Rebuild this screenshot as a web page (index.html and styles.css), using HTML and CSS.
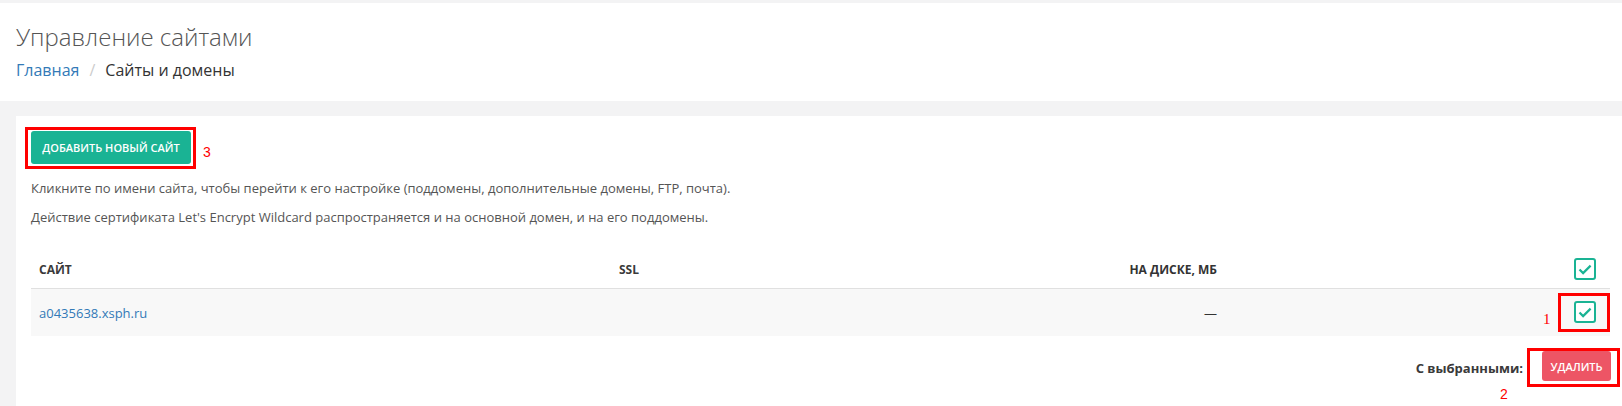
FILE: index.html
```html
<!DOCTYPE html>
<html lang="ru">
<head>
<meta charset="utf-8">
<title>Управление сайтами</title>
<link rel="stylesheet" href="styles.css">
</head>
<body>
<div class="topline"></div>
<header class="page-heading">
  <h2 class="page-title">Управление сайтами</h2>
  <ol class="breadcrumb">
    <li><a href="#">Главная</a></li>
    <li class="sep">/</li>
    <li class="active">Сайты и домены</li>
  </ol>
</header>
<main class="wrapper">
  <section class="card">
    <div class="add-row">
      <span class="mark mark-add"><button class="btn btn-primary">ДОБАВИТЬ НОВЫЙ САЙТ</button></span>
      <span class="note note-3">3</span>
    </div>
    <p class="text">Кликните по имени сайта, чтобы перейти к его настройке (поддомены, дополнительные домены, FTP, почта).</p>
    <p class="text">Действие сертификата Let's Encrypt Wildcard распространяется и на основной домен, и на его поддомены.</p>
    <table class="sites">
      <thead>
        <tr>
          <th class="c-site">САЙТ</th>
          <th class="c-ssl">SSL</th>
          <th class="c-disk">НА ДИСКЕ, МБ</th>
          <th class="c-check"><span class="cb cb-head"><svg viewBox="0 0 22 22" width="22" height="22"><path d="M5.5 11.5l3.6 3.6L16.6 7.6" fill="none" stroke="#1ab394" stroke-width="2.2"/></svg></span></th>
        </tr>
      </thead>
      <tbody>
        <tr>
          <td class="c-site"><a href="#">a0435638.xsph.ru</a></td>
          <td class="c-ssl"></td>
          <td class="c-disk">—</td>
          <td class="c-check"><span class="mark mark-row"><span class="note note-1">1</span><span class="cb"><svg viewBox="0 0 22 22" width="22" height="22"><path d="M5.5 11.5l3.6 3.6L16.6 7.6" fill="none" stroke="#1ab394" stroke-width="2.2"/></svg></span></span></td>
        </tr>
      </tbody>
    </table>
    <div class="bulk">
      <span class="bulk-label">С выбранными:</span>
      <span class="mark mark-del"><button class="btn btn-danger">УДАЛИТЬ</button><span class="note note-2">2</span></span>
    </div>
  </section>
</main>
</body>
</html>
```
FILE: styles.css
```css
html, body {
  margin: 0;
  padding: 0;
}
body {
  background: #f3f3f4;
  font-family: "Open Sans", "Noto Sans", sans-serif;
  font-size: 13px;
  color: #555;
  overflow: hidden;
  width: 1622px;
  height: 406px;
}
.topline {
  height: 3px;
}
.page-heading {
  background: #fff;
  height: 98px;
  box-sizing: border-box;
  padding: 18px 16px 0;
}
.page-title {
  margin: 0;
  font-size: 24px;
  font-weight: 300;
  line-height: 32px;
  color: #555;
}
.breadcrumb {
  list-style: none;
  margin: 6px 0 0;
  padding: 0;
  display: flex;
  font-size: 16px;
  line-height: 22px;
}
.breadcrumb a {
  color: #337ab7;
  text-decoration: none;
}
.breadcrumb .sep {
  color: #ccc;
  padding: 0 10px;
}
.breadcrumb .active {
  color: #333;
}
.wrapper {
  padding: 15px 0 0 16px;
}
.card {
  background: #fff;
  width: 1609px;
  box-sizing: border-box;
  padding: 11px 15px 20px;
  height: 300px;
}
.add-row {
  display: flex;
  align-items: center;
}
.mark {
  position: relative;
  border: 3px solid #f00;
  box-sizing: border-box;
}
.mark-add {
  display: inline-flex;
  padding: 1px 2px 2px 3px;
  margin-left: -6px;
}
.note {
  color: #f00;
  font-family: "Liberation Sans", Arial, sans-serif;
  font-size: 14px;
  line-height: 14px;
}
.note-3 {
  margin-left: 7px;
  margin-top: 8px;
}
.btn {
  border: 0;
  border-radius: 3px;
  color: #fff;
  font-family: "Open Sans", "Noto Sans", sans-serif;
  font-weight: 600;
  font-size: 11px;
  cursor: pointer;
}
.btn-primary {
  background: #1ab394;
  width: 160px;
  height: 33px;
  padding: 0;
}
.btn-danger {
  background: #ed5565;
  width: 69px;
  height: 30px;
  padding: 0;
}
.text {
  margin: 10px 0 0;
  line-height: 19px;
}
.text + .text {
  margin-top: 10px;
}
.sites {
  width: 1579px;
  table-layout: fixed;
  border-collapse: collapse;
  margin-top: 23px;
}
.sites th {
  font-size: 12px;
  font-weight: 700;
  color: #3a3a3a;
  text-align: left;
  padding: 8px;
  height: 35px;
  box-sizing: border-box;
  border-bottom: 1px solid #e0e0e0;
  vertical-align: middle;
}
.sites td {
  background: #f8f8f8;
  padding: 4px 8px;
  height: 46px;
  box-sizing: border-box;
  vertical-align: middle;
}
.sites a {
  color: #337ab7;
  text-decoration: none;
  font-size: 13px;
}
.sites .c-site { width: 580px; }
.sites .c-ssl { width: 310px; }
.sites .c-disk { text-align: right; width: 304px; color: #333; }
.sites .c-check { text-align: right; padding-right: 0; width: 385px; }
.cb {
  display: inline-block;
  width: 22px;
  height: 22px;
  border: 2px solid #1ab394;
  border-radius: 3px;
  box-sizing: border-box;
  background: #fff;
  vertical-align: middle;
  position: relative;
}
.cb svg {
  position: absolute;
  left: -2px;
  top: -2px;
}
.cb-head {
  margin-right: 14px;
}
.mark-row {
  display: inline-flex;
  padding: 5px 11px 6px 13px;
  vertical-align: middle;
}
.note-1 {
  position: absolute;
  left: -18px;
  top: 16px;
  font-family: "Liberation Serif", serif;
  font-size: 15px;
}
.bulk {
  display: flex;
  justify-content: flex-end;
  align-items: center;
  margin-top: 12px;
  margin-right: -10px;
}
.bulk-label {
  font-weight: 700;
  font-size: 13px;
  color: #3a3a3a;
  margin-right: 4px;
  margin-top: 1px;
}
.mark-del {
  display: inline-flex;
  padding: 0 6px 3px 12px;
}
.note-2 {
  position: absolute;
  left: -30px;
  top: 36px;
}
```
